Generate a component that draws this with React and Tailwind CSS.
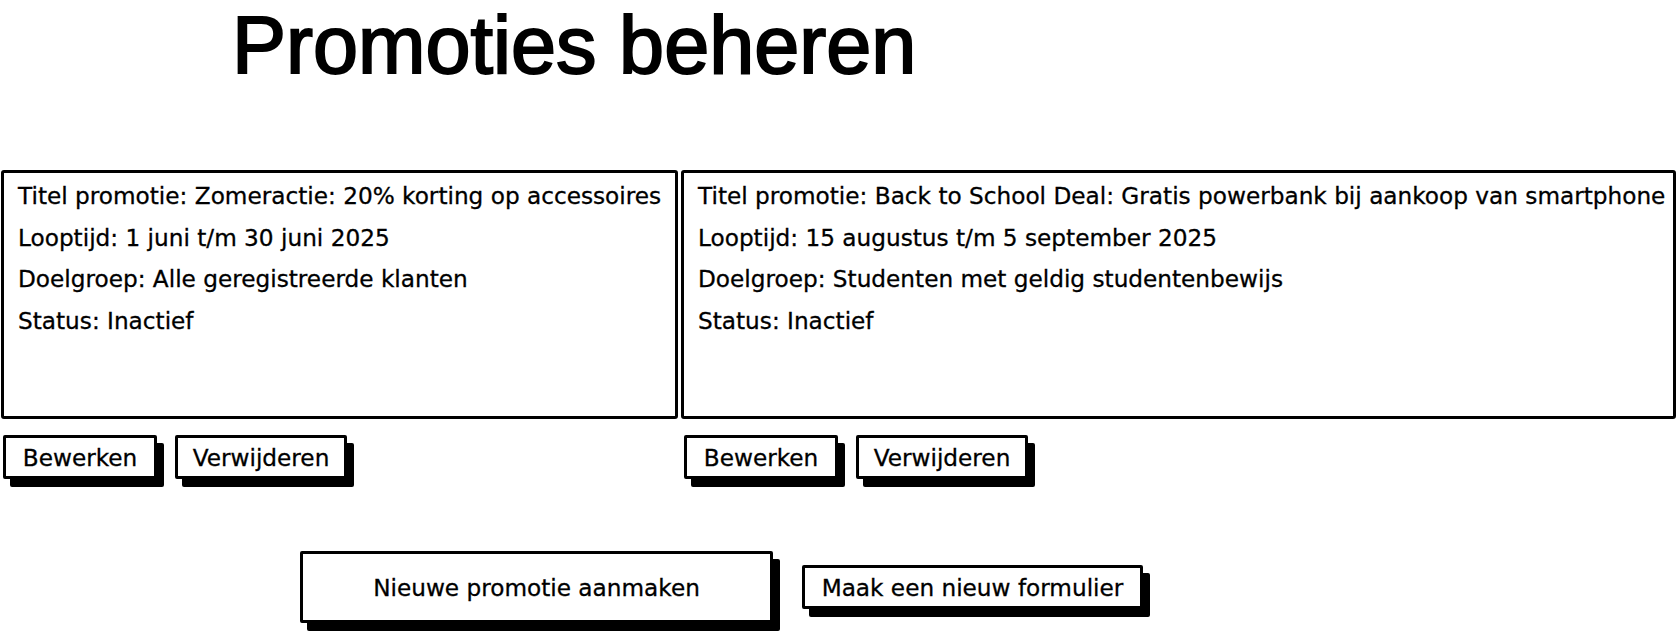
import React from "react";

// Promotions overview wireframe
const promoties = [
  {
    id: 1,
    titel: "Zomeractie: 20% korting op accessoires",
    looptijd: "1 juni t/m 30 juni 2025",
    doelgroep: "Alle geregistreerde klanten",
    status: "Inactief",
    width: "w-[677px]",
    btnOffset: "ml-[2px]",
  },
  {
    id: 2,
    titel: "Back to School Deal: Gratis powerbank bij aankoop van smartphone",
    looptijd: "15 augustus t/m 5 september 2025",
    doelgroep: "Studenten met geldig studentenbewijs",
    status: "Inactief",
    width: "w-[995px]",
    btnOffset: "ml-[3px]",
  },
];

const SketchButton = ({ children, className = "" }) => (
  <button
    className={`flex items-center justify-center border-[3px] border-black bg-white rounded-[2px] shadow-[7px_8px_0_0_#000] pt-[2px] ${className}`}
  >
    {children}
  </button>
);

const App = () => {
  return (
    <div className="w-[1678px] h-[634px] bg-white text-black font-['DejaVu_Sans',sans-serif] text-[23.2px] [-webkit-text-stroke:0.3px_black] overflow-hidden">
      {/* Title */}
      <div className="pl-[232px] pt-[3px] h-[87px]">
        <h1 className="font-['Liberation_Sans',Arial,sans-serif] text-[81px] leading-[84px] [-webkit-text-stroke:2px_black] whitespace-nowrap">
          Promoties beheren
        </h1>
      </div>

      {/* Promotion cards */}
      <div className="flex gap-[3px] pl-[1px] mt-[83px]">
        {promoties.map((p) => (
          <div key={p.id} className={p.width}>
            <div className="h-[249px] border-[3px] border-black rounded-[3px] pl-[14px] pt-[2px] leading-[41.7px]">
              <p>Titel promotie: {p.titel}</p>
              <p>Looptijd: {p.looptijd}</p>
              <p>Doelgroep: {p.doelgroep}</p>
              <p>Status: {p.status}</p>
            </div>
            <div className={`flex gap-[18px] mt-[16px] ${p.btnOffset}`}>
              <SketchButton className="w-[154px] h-[44px]">Bewerken</SketchButton>
              <SketchButton className="w-[172px] h-[44px]">Verwijderen</SketchButton>
            </div>
          </div>
        ))}
      </div>

      {/* Bottom actions */}
      <div className="flex items-center gap-[29px] pl-[300px] mt-[72px]">
        <SketchButton className="w-[473px] h-[72px]">Nieuwe promotie aanmaken</SketchButton>
        <SketchButton className="w-[341px] h-[44px]">Maak een nieuw formulier</SketchButton>
      </div>
    </div>
  );
};

export default App;
